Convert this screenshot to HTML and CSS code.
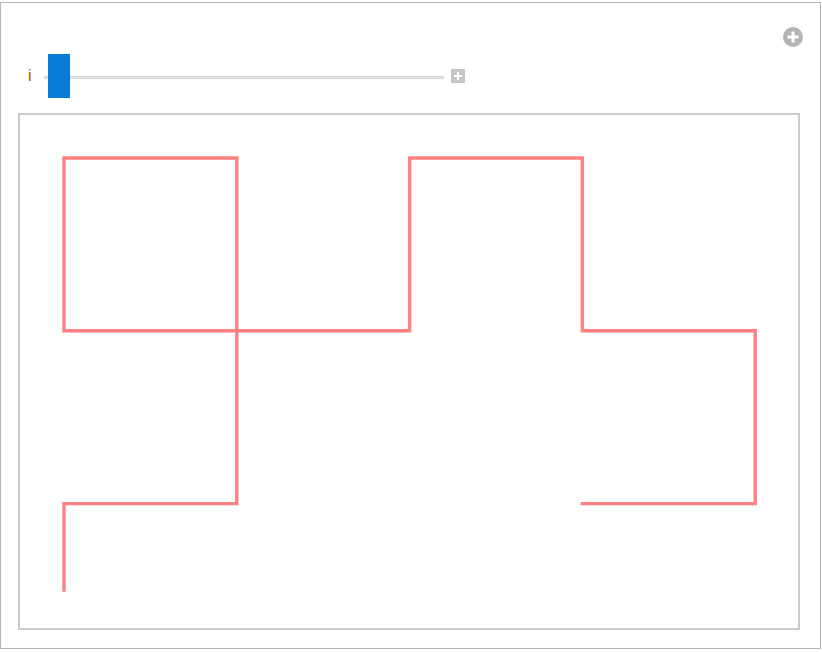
FILE: index.html
```html
<!DOCTYPE html>
<html lang="en">
<head>
    <meta charset="UTF-8">
    <title>Manipulate</title>
    <link rel="stylesheet" href="styles.css">
</head>
<body>
    <div class="frame">
        <div class="topBar">
            <svg class="addIcon" width="20" height="20" viewBox="0 0 20 20">
                <circle cx="10" cy="10" r="10" fill="#b4b4b4"/>
                <rect x="4.5" y="8.5" width="11" height="3" fill="#fff"/>
                <rect x="8.5" y="4.5" width="3" height="11" fill="#fff"/>
            </svg>
        </div>

        <div class="controls">
            <span class="label">i</span>
            <div class="slider">
                <div class="track"></div>
                <div class="thumb"></div>
            </div>
            <svg class="plusBox" width="14" height="14" viewBox="0 0 14 14">
                <rect width="14" height="14" fill="#c6c6c6"/>
                <rect x="3" y="6" width="8" height="2" fill="#fff"/>
                <rect x="6" y="3" width="2" height="8" fill="#fff"/>
            </svg>
        </div>

        <div class="plot">
            <svg width="778" height="513" viewBox="0 0 778 513">
                <polyline class="walk" points="44,475 44,388.6 216.8,388.6 216.8,43 44,43 44,215.8 389.6,215.8 389.6,43 562.4,43 562.4,215.8 735.2,215.8 735.2,388.6 562.4,388.6"/>
            </svg>
        </div>
    </div>
</body>
</html>
```

FILE: styles.css
```css
body {
    margin: 0;
    background-color: white;
    font-family: "Liberation Sans", Arial, sans-serif;
}
.frame {
    box-sizing: border-box;
    width: 821px;
    height: 647px;
    margin-top: 2px;
    border: 1px solid #b5b5b5;
    padding: 24px 17px 0 17px;
}
.topBar {
    display: flex;
    justify-content: flex-end;
    height: 20px;
}
.addIcon {
    display: block;
}
.controls {
    display: flex;
    align-items: center;
    height: 44px;
    margin-top: 7px;
}
.label {
    box-sizing: border-box;
    width: 26px;
    padding-left: 10px;
    font-size: 16px;
    color: #9a5c00;
}
.slider {
    position: relative;
    width: 400px;
    height: 44px;
}
.track {
    position: absolute;
    top: 22px;
    left: 0;
    box-sizing: border-box;
    width: 400px;
    height: 3px;
    border: 1px solid #d2d2d2;
    background-color: #ececec;
}
.thumb {
    position: absolute;
    top: 0;
    left: 4px;
    width: 22px;
    height: 44px;
    background-color: #0a7bd8;
}
.plusBox {
    display: block;
    margin-left: 7px;
}
.plot {
    box-sizing: border-box;
    width: 782px;
    height: 517px;
    margin-top: 15px;
    border: 2px solid #cbcbcb;
}
.plot svg {
    display: block;
}
.walk {
    fill: none;
    stroke: #ff8080;
    stroke-width: 3.4;
    stroke-linejoin: miter;
    stroke-linecap: square;
}
```
